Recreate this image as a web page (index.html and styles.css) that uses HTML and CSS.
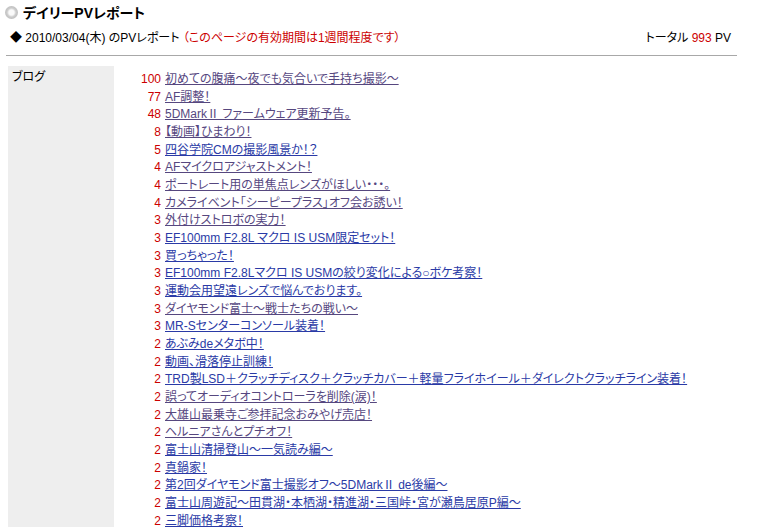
FILE: index.html
```html
<!DOCTYPE html>
<html lang="ja">
<head>
    <meta charset="UTF-8">
    <title>デイリーPVレポート</title>
    <link rel="stylesheet" href="styles.css">
</head>
<body>
    <div class="head">
        <span class="dot"></span>
        <h1>デイリーPVレポート</h1>
    </div>
    <div class="meta">
        <span>◆ 2010/03/04(木) のPVレポート <span class="red">（このページの有効期間は1週間程度です）</span></span>
        <span class="total">トータル <span class="red">993</span> PV</span>
    </div>
    <div class="rule"></div>

    <div class="report">
        <div class="cat">ブログ</div>
        <div class="list">
            <span class="num">100</span><a class="v" href="#">初めての腹痛～夜でも気合いで手持ち撮影～</a>
            <span class="num">77</span><a class="v" href="#">AF調整！</a>
            <span class="num">48</span><a class="v" href="#">5DMarkⅡ ファームウェア更新予告。</a>
            <span class="num">8</span><a class="v" href="#">【動画】ひまわり！</a>
            <span class="num">5</span><a href="#">四谷学院CMの撮影風景か！？</a>
            <span class="num">4</span><a class="v" href="#">AFマイクロアジャストメント！</a>
            <span class="num">4</span><a class="v" href="#">ポートレート用の単焦点レンズがほしい・・・。</a>
            <span class="num">4</span><a class="v" href="#">カメライベント「シーピープラス」オフ会お誘い！</a>
            <span class="num">3</span><a class="v" href="#">外付けストロボの実力！</a>
            <span class="num">3</span><a href="#">EF100mm F2.8L マクロ IS USM限定セット！</a>
            <span class="num">3</span><a href="#">買っちゃった！</a>
            <span class="num">3</span><a href="#">EF100mm F2.8Lマクロ IS USMの絞り変化による○ボケ考察！</a>
            <span class="num">3</span><a href="#">運動会用望遠レンズで悩んでおります。</a>
            <span class="num">3</span><a class="v" href="#">ダイヤモンド富士～戦士たちの戦い～</a>
            <span class="num">3</span><a href="#">MR-Sセンターコンソール装着！</a>
            <span class="num">2</span><a href="#">あぶみdeメタボ中！</a>
            <span class="num">2</span><a href="#">動画、滑落停止訓練！</a>
            <span class="num">2</span><a href="#">TRD製LSD＋クラッチディスク＋クラッチカバー＋軽量フライホイール＋ダイレクトクラッチライン装着！</a>
            <span class="num">2</span><a class="v" href="#">誤ってオーディオコントローラを削除(涙)！</a>
            <span class="num">2</span><a class="v" href="#">大雄山最乗寺ご参拝記念おみやげ売店！</a>
            <span class="num">2</span><a class="v" href="#">ヘルニアさんとプチオフ！</a>
            <span class="num">2</span><a href="#">富士山清掃登山～一気読み編～</a>
            <span class="num">2</span><a href="#">真鍋家！</a>
            <span class="num">2</span><a href="#">第2回ダイヤモンド富士撮影オフ～5DMarkⅡ de後編～</a>
            <span class="num">2</span><a href="#">富士山周遊記～田貫湖・本栖湖・精進湖・三国峠・宮が瀬鳥居原P編～</a>
            <span class="num">2</span><a href="#">三脚価格考察！</a>
        </div>
    </div>
</body>
</html>
```

FILE: styles.css
```css
body {
    margin: 0;
    font-family: "Liberation Sans", "Noto Sans CJK JP", sans-serif;
    font-size: 12px;
    font-feature-settings: "palt";
    color: #000;
    background: #fff;
}
.head {
    display: flex;
    align-items: center;
    height: 24px;
    padding-left: 5px;
}
.dot {
    width: 13px;
    height: 13px;
    border-radius: 50%;
    background: radial-gradient(circle, #fafafa 0 28%, #cdcdcd 48%, #bdbdbd 75%, #dedede 100%);
    margin-right: 5px;
}
h1 {
    margin: 0;
    font-size: 14px;
    font-weight: bold;
}
.meta {
    display: flex;
    justify-content: space-between;
    align-items: center;
    height: 22px;
    padding: 0 29px 0 10px;
    margin-top: 1px;
}
.red {
    color: #cc0000;
}
.rule {
    height: 1px;
    margin: 8px 23px 0 6px;
    background: #a8a8a8;
}
.report {
    display: flex;
    margin: 10px 0 0 8px;
}
.cat {
    width: 102px;
    padding: 1px 0 0 4px;
    background: #eeeeee;
    min-height: 460px;
}
.list {
    display: grid;
    grid-template-columns: 47px auto;
    column-gap: 4px;
    justify-content: start;
    padding-top: 5px;
    line-height: 17.67px;
}
.num {
    color: #cc0000;
    text-align: right;
}
a {
    color: #2a3aa6;
}
a.v {
    color: #56477f;
}
```
